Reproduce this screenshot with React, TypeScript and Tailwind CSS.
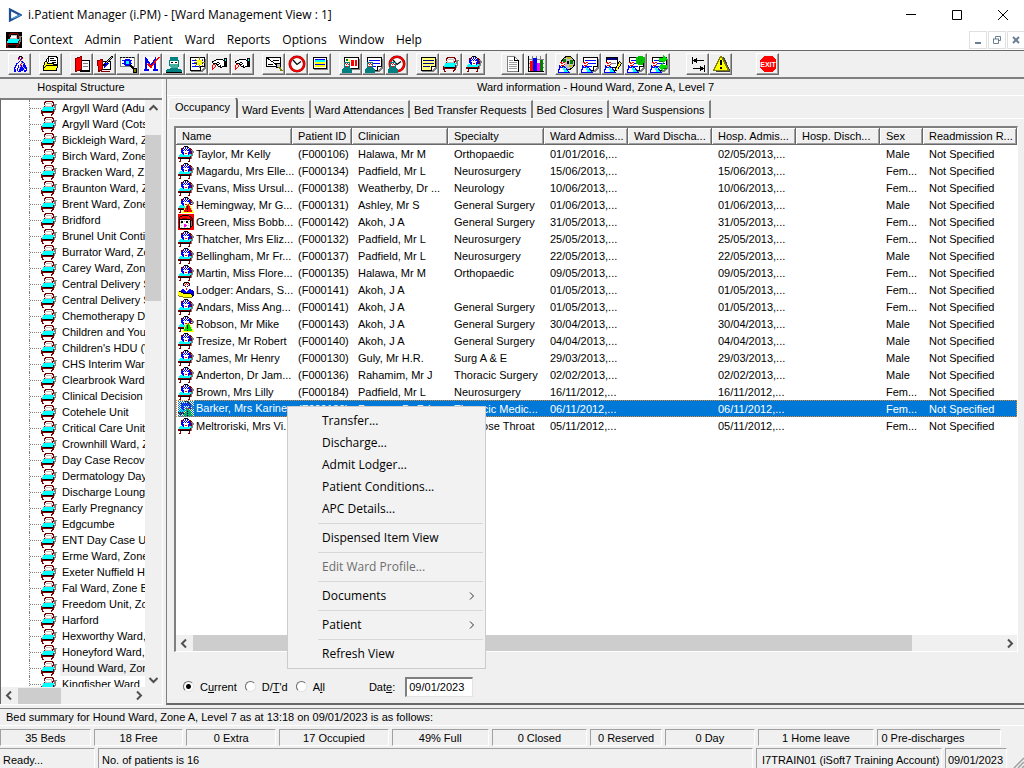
import React from "react";

const PALETTE: Record<string, string> = {
  r: "#800000",
  R: "#ff0000",
  c: "#00ffff",
  t: "#008080",
  k: "#000000",
  g: "#808080",
  l: "#c0c0c0",
  w: "#ffffff",
  b: "#0000ff",
  n: "#000080",
  y: "#ffff00",
  o: "#808000",
  G: "#00e000",
  e: "#008000",
  m: "#ff00ff",
  p: "#0078d7",
};

function Pixels({ rows, size = 16 }: { rows: string[]; size?: number }) {
  const rects: React.ReactNode[] = [];
  rows.forEach((row, y) => {
    let x = 0;
    while (x < row.length) {
      const ch = row[x];
      let end = x + 1;
      while (end < row.length && row[end] === ch) end++;
      if (PALETTE[ch]) {
        rects.push(<rect key={`${x}-${y}`} x={x} y={y} width={end - x} height={1} fill={PALETTE[ch]} />);
      }
      x = end;
    }
  });
  return (
    <svg width={size} height={size} viewBox="0 0 16 16" shapeRendering="crispEdges" className="block shrink-0" aria-hidden="true">
      {rects}
    </svg>
  );
}

const BED = [
  "................",
  "....rrrrrrrr....",
  "...rr......rr...",
  "...r.llllll.r...",
  "...r.wwwwwl.rggg",
  "....lwwwwwlrrgg.",
  "...rlllllllr.gg.",
  "..cccccccccccgg.",
  "..ccccccccccc.g.",
  ".cccccccccccrgg.",
  "rcccccccccccrg..",
  "rrkkkkkkkkkkrg..",
  "rrrrrrrrrrrrr...",
  "rr.........rr...",
  ".r........rr....",
  ".rr.......r.....",
];

const PATIENT = [
  "......kkkk......",
  ".....rwbwbk.....",
  "...rrbwbwbwrr...",
  "...rbwbwbwbbrr..",
  "...bbbwbwbbbrgg.",
  "...bbwwwwwwbbrgg",
  "...bbbwwwwbbbrgg",
  "....bbwRRwbbrrg.",
  "..cccbwwwwbccgg.",
  ".ccccccccccccgg.",
  ".cccccccccccrg..",
  "rrrrrrrrrrrrrg..",
  "rrkkkkkkkkkkrg..",
  "..r........r....",
  "..r........r....",
  ".rr.......rr....",
];

const PATIENT_RED = [
  ...PATIENT.slice(0, 6),
  "...bbbwwwwybb.gg",
  "....bbwRRyRyrrg.",
  "..cccbwwyRRy....",
  ".ccccccyRkRRy...",
  ".ccccccyRkRRy...",
  "rrrrrryRRkRRRy..",
  "rrkkkkyRRkRRRy..",
  "..r..yRRRRRRRRy.",
  "..r..yRRRkRRRRy.",
  ".rr.yyyyyyyyyyyy",
];

const PATIENT_GREEN = PATIENT_RED.map((r, i) => (i > 7 ? r.replace(/R/g, "G") : r));

const ALERT_FACE = [
  "RRRRRRRRRRRRRRRR",
  "RRRRkkkkkkkRRRRR",
  "RRkkRRRRRRRkkRRR",
  "RkRRRRRRRRRRrkRR",
  "RkRRrrrrrRRRrrkR",
  "RkkkkkkkkkkkrrkR",
  "RkwlwwwwwwlwkrkR",
  "RkwkkwlwkkwlkgkR",
  "RklkkwwwkkwwkgkR",
  "RkwlwwwwwwlwkgkR",
  "RkwwwwmmwwwwkgkR",
  "RkwlwwmmmwlwkgkR",
  "RkwwwwmmwwwwkkRR",
  "RkwlwwlwwlwwkRRR",
  "RRkkkkkkkkkkRRRR",
  "RRRRRRRRRRRRRRRR",
];

const LODGER = [
  "......kkkkk.....",
  ".....kRwRwRk....",
  ".....kwRwRwk....",
  ".....bRwwwRb....",
  "......wkwkw.....",
  "......wwwww.....",
  ".......wRw......",
  "....bbwwRwwbb...",
  "...bbbbwwwbbbbn.",
  "ykkbbbbbwbbbbbbn",
  "yyykkbbbbbbbbbbn",
  "yyyyykkkkkkkkbbn",
  "yyyyyyyyyyyyykbn",
  "oyyyyyyyyyyyyykk",
  ".ooooyyyyyyyyyk.",
  ".....ooooooooo..",
];

const SELECTED = PATIENT_GREEN.map((r, y) =>
  r
    .padEnd(16, ".")
    .split("")
    .map((ch, x) => ((x + y) % 2 === 0 ? "p" : ch))
    .join("")
);

const DOCTOR = [
  ".......kkk......",
  "......RbwRk.....",
  "......bRwbR.....",
  "......RwbRw.....",
  ".......wRw......",
  ".......bwbb.....",
  "......bwwlbb....",
  "....bbwwwRllb...",
  "....bwwwRlwbb...",
  "...bbwbwRblbbb..",
  "...bwwbwlblbbb..",
  "..bbwwblbbblbbb.",
  "..bwwbwlbbbblbb.",
  "..bbwbwbbbbblwb.",
  "..bbwbwbbbb.bbb.",
  "..bb..bbb...bb..",
];

const FOLDER = [
  ".....kkkkkkkkk..",
  ".....kwwwwwwwkk.",
  "....kkwkkkkwwwk.",
  "...kwkwwwwwwwwk.",
  "...kwkwkkkkkkwk.",
  "..kkwkwwwwwwwwk.",
  ".kyykwwwwkkkkwk.",
  ".kyykkkkkkkwwwk.",
  ".kyyyyyyyykkkkk.",
  "kyykkkkkkkkkkkk.",
  "kykyyyyyyyyyyyk.",
  "kkyyyyyyyyyyyyk.",
  "kyyyyyyyyyyyyk..",
  "kyyyyyyyyyyyyk..",
  "kkkkkkkkkkkkkk..",
  "................",
];

const HAND = [
  "................",
  "................",
  "............kkk.",
  "....kkkkkkk.kck.",
  "..kkwwwwwwwkkck.",
  "kkwwwwwwwwwwkkk.",
  "kwwwwkkwwwwwkkk.",
  ".kkkkwwkwwwwkkk.",
  ".RR.kkkwwwwwkkk.",
  "R..R.kwwkwwwkkk.",
  "R..R..kkkwkkkkk.",
  "R.R.....kk......",
  "RR..............",
  "R...............",
  "................",
  "................",
];

function Art({ children }: { children: React.ReactNode }) {
  return (
    <svg width="18" height="18" viewBox="0 0 18 18" shapeRendering="crispEdges" className="block" aria-hidden="true">
      {children}
    </svg>
  );
}

const Note = ({ fill = "#fff", line = "#0000ff" }: { fill?: string; line?: string }) => (
  <>
    <path d="M3 4h15v9l-4 4H3z" fill="#808080" />
    <path d="M2.500 2.500h14v9l-4 4h-10z" fill={fill} stroke="#000" />
    <path d="M16.500 11.500h-4v4" fill="#fff" stroke="#000" />
    <path d="M4 5.500h11M4 8.500h11M4 11.500h7" stroke={line} />
  </>
);

const Person = () => (
  <>
    <path d="M0 18v-4l3-2h4l3 2v4z" fill="#008080" />
    <path d="M2 7h6v5H2z" fill="#008080" />
    <path d="M3 8h4v3H3z" fill="#fff" />
    <path d="M3 8h1v1H3zM5 8h1v1H5zM4 9h1v1H4zM6 9h1v1H6zM4 11h2v1H4z" fill="#ff0000" />
  </>
);

const Nurse = () => (
  <>
    <path d="M0 17l2-5h5l4 5z" fill="#fff" stroke="#0000ff" />
    <path d="M5 12l5 5H6z" fill="#00ffff" />
    <path d="M2 7h5v4H2z" fill="#fff" />
    <path d="M2 7h2v1H2zM5 7h2v1H5zM3 8h2v1H3zM6 9h1v1H6zM3 10h3v1H3z" fill="#ff0000" />
    <path d="M1 10l2 3 4-2" fill="none" stroke="#0000ff" />
  </>
);

const Clock = () => (
  <g shapeRendering="auto">
    <circle cx="9" cy="9" r="7.200" fill="#fff" stroke="#800000" strokeWidth="2.600" />
    <circle cx="9" cy="9" r="7.200" fill="none" stroke="#ff0000" strokeWidth="1.600" />
    <path d="M5 5l4 4.500L13 6.500" fill="none" stroke="#000" strokeWidth="1.200" />
  </g>
);

const Chart = () => (
  <Art>
    <path d="M1 4.500h16M1 8.500h16M1 12.500h16M5.500 1v15M9.500 1v15M13.500 1v15" stroke="#808080" />
    <path d="M1.500 1v15.500H17" fill="none" stroke="#000" />
    <path d="M3 6h3v10H3z" fill="#ff0000" />
    <path d="M6 3h4v13H6z" fill="#0000ff" />
    <path d="M10 8h3v8h-3z" fill="#ff00ff" />
    <path d="M13 5h3v11h-3z" fill="#008000" />
  </Art>
);

type Tool = { label: string; icon: React.ReactNode };

const TOOL_GROUPS: { gap: string; tools: Tool[] }[] = [
  { gap: "ml-2", tools: [{ label: "Clinician", icon: <Pixels rows={DOCTOR} size={16} /> }] },
  { gap: "ml-2", tools: [{ label: "Open file", icon: <Pixels rows={FOLDER} size={16} /> }] },
  {
    gap: "ml-2",
    tools: [
      {
        label: "Casebook",
        icon: (
          <Art>
            <path d="M7.500 5.500h9v10h-9z" fill="#fff" stroke="#000" strokeWidth="1" />
            <path d="M10 8.500h5M10 11.500h5" stroke="#808080" />
            <path d="M7 15.500h10" stroke="#000" strokeWidth="2" />
            <path d="M2.500 3.500l6-2v13l-6 2z" fill="#ff0000" stroke="#800000" />
          </Art>
        ),
      },
      {
        label: "Edit casebook",
        icon: (
          <Art>
            <path d="M6.500 6.500h8v8h-8z" fill="#fff" stroke="#000" />
            <path d="M1.500 5.500l5-1v10l-4 2z" fill="#ff0000" stroke="#800000" />
            <path d="M16 1l-7 7-2 3 3-2 7-7z" fill="#c0c0c0" stroke="#000" />
            <path d="M8 8.500h4l-4 4" fill="none" stroke="#0000ff" />
            <path d="M5 16.500h9" stroke="#800000" />
          </Art>
        ),
      },
      {
        label: "Find patient",
        icon: (
          <Art>
            <path d="M1.500 2.500h14v9h-14z" fill="#fff" stroke="#808080" />
            <path d="M1 2.500h15" stroke="#000" strokeDasharray="2 1" />
            <path d="M3 5.500h10M3 8.500h10" stroke="#0000ff" />
            <path d="M6 4h5v1h1v5h-1v1H6v-1H5V5h1z" fill="#0000ff" />
            <path d="M7 6h3v3H7z" fill="#00ffff" />
            <path d="M11 10l4 4" stroke="#000" strokeWidth="2" />
            <path d="M14 13h3v4h-3z" fill="#808000" stroke="#000" />
          </Art>
        ),
      },
      {
        label: "Medication",
        icon: (
          <Art>
            <path d="M1 2h16v14H1z" fill="#fff" />
            <path d="M4 15V4l5 7 4-6v10" fill="none" stroke="#0000ff" strokeWidth="2" />
            <path d="M2 15h5M11 15h5" stroke="#0000ff" strokeWidth="2" />
            <path d="M6 9l3 3 8-10" fill="none" stroke="#ff0000" strokeWidth="1.500" />
          </Art>
        ),
      },
      {
        label: "Theatre",
        icon: (
          <Art>
            <path d="M5 2h8v3h1v6l-3 3H7l-3-3V5h1z" fill="#008080" />
            <path d="M5 6h8v3H5z" fill="#fff" />
            <path d="M6 7h2v1H6zM10 7h2v1h-2z" fill="#000" />
            <path d="M5 9h8v3l-2 2H7l-2-2z" fill="#40b0a0" />
            <path d="M1 17v-2l5-2h6l5 2v2z" fill="#008080" />
            <path d="M1 17.500h16" stroke="#000" />
          </Art>
        ),
      },
      {
        label: "New note",
        icon: (
          <Art>
            <Note />
            <path d="M11.500 2v11M6 7.500h11M7 4l8 7M15 4l-8 7" stroke="#808000" />
            <path d="M9 5h5v5H9z" fill="#ffff00" />
            <path d="M11 7h1v1h-1z" fill="#fff" />
          </Art>
        ),
      },
      { label: "Refer in", icon: <Pixels rows={HAND} /> },
      { label: "Refer out", icon: <Pixels rows={HAND} /> },
    ],
  },
  {
    gap: "ml-2",
    tools: [
      {
        label: "Find letter",
        icon: (
          <Art>
            <path d="M1.500 2.500h14v9h-14z" fill="#fff" stroke="#000" />
            <path d="M2 3l13 9M8 5.500h6M3 9.500h5" stroke="#000" />
            <path d="M11 8h4v4h-4z" fill="#c0c0c0" stroke="#000" />
            <path d="M14 12l3 4" stroke="#808000" strokeWidth="2" />
          </Art>
        ),
      },
      { label: "Waiting times", icon: <Art><Clock /></Art> },
      {
        label: "Clinic list",
        icon: (
          <Art>
            <path d="M3 5h14v10H3z" fill="#808080" />
            <path d="M2.500 2.500h13v11h-13z" fill="#fff" stroke="#000" />
            <path d="M4 4h10v1H4z" fill="#0000ff" />
            <path d="M4 5h10v2H4z" fill="#00ffff" />
            <path d="M4 7h10v2H4z" fill="#ffff00" />
            <path d="M4 9h10v1H4z" fill="#0000ff" />
            <path d="M4 10h10v2H4z" fill="#ffff00" />
          </Art>
        ),
      },
    ],
  },
  {
    gap: "ml-2",
    tools: [
      {
        label: "Outpatient card",
        icon: (
          <Art>
            <path d="M4 4h14v11H4z" fill="#808080" />
            <path d="M2.500 2.500h14v11h-14z" fill="#fff" stroke="#000" />
            <path d="M4 4h2v2H4zM4 7h2v1H4z" fill="#008000" />
            <path d="M9 5h3v6H9zM13 5h2v6h-2z" fill="#ff0000" />
            <path d="M7 4h1v3H7z" fill="#ffff00" />
            <Person />
          </Art>
        ),
      },
      { label: "Outpatient note", icon: <Art><Note /><Person /></Art> },
      { label: "Outpatient clock", icon: <Art><Clock /><Person /></Art> },
    ],
  },
  {
    gap: "ml-2",
    tools: [
      { label: "Ward note", icon: <Art><Note fill="#ffff80" line="#000080" /></Art> },
      { label: "Ward view", icon: <Pixels rows={BED} size={16} /> },
      { label: "Inpatient", icon: <Pixels rows={PATIENT} size={16} /> },
    ],
  },
  {
    gap: "ml-4",
    tools: [
      {
        label: "Document",
        icon: (
          <Art>
            <path d="M3.500 1.500h7l4 4v11h-11z" fill="#fff" stroke="#808080" />
            <path d="M10.500 1.500v4h4v11" fill="none" stroke="#000" />
            <path d="M5 5.500h4M5 7.500h8M5 9.500h8M5 11.500h8M5 13.500h8" stroke="#a0a0a0" />
          </Art>
        ),
      },
      { label: "Reports", icon: <Chart /> },
    ],
  },
  {
    gap: "ml-2",
    tools: [
      {
        label: "Community",
        icon: (
          <Art>
            <circle cx="10" cy="8" r="6.500" fill="#c0c0c0" stroke="#000" />
            <path d="M5 4h3v3H5zM12 5h3v4h-3z" fill="#008000" />
            <path d="M9 2h4v2H9zM11 10h3v2h-3z" fill="#c0c000" />
            <path d="M9 6h2v3H9z" fill="#000" />
            <Nurse />
          </Art>
        ),
      },
      { label: "Nurse note", icon: <Art><Note /><Nurse /></Art> },
      {
        label: "Edit nurse note",
        icon: (
          <Art>
            <path d="M2.500 2.500h11v10h-11z" fill="#fff" stroke="#000" />
            <path d="M3 4h10" stroke="#000080" strokeWidth="2" />
            <path d="M5 8.500h7" stroke="#808080" />
            <Nurse />
            <path d="M15.500 6.500l-4 7-1 3 3-2 4-6z" fill="#ffff00" stroke="#000" />
          </Art>
        ),
      },
      {
        label: "Visit note",
        icon: (
          <Art>
            <Note />
            <path d="M9 2h2V1h5v1h2v6h-2v2h-5V9H9z" fill="#00c000" />
            <path d="M11 3h1v1h-1zM14 5h1v1h-1zM12 7h1v1h-1z" fill="#008000" />
            <Nurse />
          </Art>
        ),
      },
      {
        label: "Transfer note",
        icon: (
          <Art>
            <Note />
            <path d="M9 3h4V0l5 4-5 4V6H9z" fill="#00e000" />
            <path d="M17 10h-4V8l-5 4 5 4v-3h4z" fill="#00e000" />
            <path d="M9 6.500h4M13 13.500h4" stroke="#008000" />
            <Nurse />
          </Art>
        ),
      },
    ],
  },
  {
    gap: "ml-4",
    tools: [
      {
        label: "Switch",
        icon: (
          <Art>
            <path d="M3.500 2v7M15.500 10v7M4 5.500h11M4 13.500h11" stroke="#000" />
            <path d="M4 5.500l4-3v6zM15 13.500l-4-3v6z" fill="#000" />
          </Art>
        ),
      },
      {
        label: "Alerts",
        icon: (
          <Art>
            <path d="M10 2h2l6 13v2H4z" fill="#404040" />
            <path d="M8.500 1.500h1l7 14h-15z" fill="#ffff00" stroke="#808000" />
            <path d="M8 5h2v5H8zM8 12h2v2H8z" fill="#000" />
          </Art>
        ),
      },
    ],
  },
  {
    gap: "ml-6",
    tools: [
      {
        label: "Exit",
        icon: (
          <Art>
            <path d="M5 1h8l4 4v8l-4 4H5l-4-4V5z" fill="#ff0000" />
            <text x="9" y="12" textAnchor="middle" fontSize="7" fontWeight="700" fill="#fff" fontFamily="Liberation Sans, sans-serif">
              EXIT
            </text>
          </Art>
        ),
      },
    ],
  },
];

const WARDS = [
  "Argyll Ward (Adul",
  "Argyll Ward (Cots",
  "Bickleigh Ward, Z",
  "Birch Ward, Zone",
  "Bracken Ward, Z",
  "Braunton Ward, Z",
  "Brent Ward, Zone",
  "Bridford",
  "Brunel Unit Contin",
  "Burrator Ward, Zo",
  "Carey Ward, Zon",
  "Central Delivery S",
  "Central Delivery S",
  "Chemotherapy Da",
  "Children and You",
  "Children's HDU (W",
  "CHS Interim Ward",
  "Clearbrook Ward,",
  "Clinical Decision U",
  "Cotehele Unit",
  "Critical Care Unit",
  "Crownhill Ward, Z",
  "Day Case Recov",
  "Dermatology Day",
  "Discharge Loung",
  "Early Pregnancy U",
  "Edgcumbe",
  "ENT Day Case U",
  "Erme Ward, Zone",
  "Exeter Nuffield Ho",
  "Fal Ward, Zone B",
  "Freedom Unit, Zo",
  "Harford",
  "Hexworthy Ward,",
  "Honeyford Ward,",
  "Hound Ward, Zon",
  "Kingfisher Ward",
];

const ICONS = { bed: PATIENT, red: PATIENT_RED, green: PATIENT_GREEN, face: ALERT_FACE, lodger: LODGER, selected: SELECTED };

type Row = [keyof typeof ICONS, string, string, string, string, string, string, string];

const ROWS: Row[] = [
  ["bed", "Taylor, Mr Kelly", "(F000106)", "Halawa, Mr M", "Orthopaedic", "01/01/2016,...", "02/05/2013,...", "Male"],
  ["bed", "Magardu, Mrs Elle...", "(F000134)", "Padfield, Mr L", "Neurosurgery", "15/06/2013,...", "15/06/2013,...", "Fem..."],
  ["bed", "Evans, Miss Ursul...", "(F000138)", "Weatherby, Dr ...", "Neurology", "10/06/2013,...", "10/06/2013,...", "Fem..."],
  ["red", "Hemingway, Mr G...", "(F000131)", "Ashley, Mr S", "General Surgery", "01/06/2013,...", "01/06/2013,...", "Male"],
  ["face", "Green, Miss Bobb...", "(F000142)", "Akoh, J A", "General Surgery", "31/05/2013,...", "31/05/2013,...", "Fem..."],
  ["bed", "Thatcher, Mrs Eliz...", "(F000132)", "Padfield, Mr L", "Neurosurgery", "25/05/2013,...", "25/05/2013,...", "Fem..."],
  ["bed", "Bellingham, Mr Fr...", "(F000137)", "Padfield, Mr L", "Neurosurgery", "22/05/2013,...", "22/05/2013,...", "Male"],
  ["bed", "Martin, Miss Flore...", "(F000135)", "Halawa, Mr M", "Orthopaedic", "09/05/2013,...", "09/05/2013,...", "Fem..."],
  ["lodger", "Lodger: Andars, S...", "(F000141)", "Akoh, J A", "", "01/05/2013,...", "01/05/2013,...", "Fem..."],
  ["bed", "Andars, Miss Ang...", "(F000141)", "Akoh, J A", "General Surgery", "01/05/2013,...", "01/05/2013,...", "Fem..."],
  ["green", "Robson, Mr Mike", "(F000143)", "Akoh, J A", "General Surgery", "30/04/2013,...", "30/04/2013,...", "Male"],
  ["bed", "Tresize, Mr Robert", "(F000140)", "Akoh, J A", "General Surgery", "04/04/2013,...", "04/04/2013,...", "Male"],
  ["bed", "James, Mr Henry", "(F000130)", "Guly, Mr H.R.", "Surg A & E", "29/03/2013,...", "29/03/2013,...", "Male"],
  ["bed", "Anderton, Dr Jam...", "(F000136)", "Rahamim, Mr J", "Thoracic Surgery", "02/02/2013,...", "02/02/2013,...", "Male"],
  ["bed", "Brown, Mrs Lilly", "(F000184)", "Padfield, Mr L", "Neurosurgery", "16/11/2012,...", "16/11/2012,...", "Fem..."],
  ["selected", "Barker, Mrs Karine", "(F000139)", "Ranson, Dr R I", "Thoracic Medic...", "06/11/2012,...", "06/11/2012,...", "Fem..."],
  ["bed", "Meltroriski, Mrs Vi...", "", "", "Ear Nose Throat", "05/11/2012,...", "05/11/2012,...", "Fem..."],
];

const COLUMNS = [
  { title: "Name", width: "w-[116px]" },
  { title: "Patient ID", width: "w-[60px]" },
  { title: "Clinician", width: "w-[96px]" },
  { title: "Specialty", width: "w-[96px]" },
  { title: "Ward Admiss...", width: "w-[84px]" },
  { title: "Ward Discha...", width: "w-[84px]" },
  { title: "Hosp. Admis...", width: "w-[84px]" },
  { title: "Hosp. Disch...", width: "w-[84px]" },
  { title: "Sex", width: "w-[43px]" },
  { title: "Readmission R...", width: "w-auto" },
];

const CHEVRONS = {
  up: "M1.500 7L5.500 3l4 4",
  down: "M1.500 4l4 4 4-4",
  left: "M7 1.500L3 5.500l4 4",
  right: "M4 1.500l4 4-4 4",
};

function ScrollButton({ dir }: { dir: keyof typeof CHEVRONS }) {
  return (
    <button type="button" aria-label={`Scroll ${dir}`} className="flex size-4 shrink-0 items-center justify-center">
      <svg width="11" height="11" viewBox="0 0 11 11" aria-hidden="true">
        <path d={CHEVRONS[dir]} fill="none" stroke="#505050" strokeWidth="2" />
      </svg>
    </button>
  );
}

function Radio({ id, checked, children }: { id: string; checked?: boolean; children: React.ReactNode }) {
  return (
    <div className="flex items-center gap-[6px]">
      <input
        id={id}
        type="radio"
        name="period"
        defaultChecked={checked}
        className="size-[11px] appearance-none rounded-full border border-t-[#696969] border-l-[#696969] border-r-[#e3e3e3] border-b-[#e3e3e3] bg-white checked:bg-[radial-gradient(circle,#000_0_2px,#fff_3px)]"
      />
      <label htmlFor={id}>{children}</label>
    </div>
  );
}

const MENU: ({ label: string; disabled?: boolean; sub?: boolean } | null)[] = [
  { label: "Transfer..." },
  { label: "Discharge..." },
  { label: "Admit Lodger..." },
  { label: "Patient Conditions..." },
  { label: "APC Details..." },
  null,
  { label: "Dispensed Item View" },
  null,
  { label: "Edit Ward Profile...", disabled: true },
  null,
  { label: "Documents", sub: true },
  null,
  { label: "Patient", sub: true },
  null,
  { label: "Refresh View" },
];

const TABS = ["Ward Events", "Ward Attendances", "Bed Transfer Requests", "Bed Closures", "Ward Suspensions"];

const SUMMARY = ["35 Beds", "18 Free", "0 Extra", "17 Occupied", "49% Full", "0 Closed", "0 Reserved", "0 Day", "1 Home leave", "0 Pre-discharges"];

export default function App() {
  return (
    <div className="relative flex h-screen flex-col overflow-hidden bg-[#f0f0f0] font-['Liberation_Sans',Arial,sans-serif] text-[11px] leading-4 text-black">
      <header className="bg-white font-['Open_Sans','Noto_Sans',sans-serif] text-[12px]">
        <div className="flex h-[30px] items-center pl-2">
          <svg width="14" height="14" viewBox="0 0 14 14" className="mr-[6px]" aria-hidden="true">
            <path d="M2 1.500v11L12.500 7z" fill="none" stroke="#1c4f93" strokeWidth="2.200" />
            <path d="M4.500 10.500L12.500 7" stroke="#4fb3e8" strokeWidth="1" />
          </svg>
          <h1>i.Patient Manager (i.PM) - [Ward Management View : 1]</h1>
          <div className="ml-auto flex items-center gap-9 pr-4">
            <button type="button" aria-label="Minimize">
              <svg width="10" height="10" viewBox="0 0 10 10"><path d="M0 4.500h10" stroke="#000" /></svg>
            </button>
            <button type="button" aria-label="Maximize">
              <svg width="10" height="10" viewBox="0 0 10 10"><path d="M.5.500h9v9h-9z" fill="none" stroke="#000" /></svg>
            </button>
            <button type="button" aria-label="Close">
              <svg width="10" height="10" viewBox="0 0 10 10"><path d="M0 0l10 10M10 0L0 10" stroke="#000" /></svg>
            </button>
          </div>
        </div>
        <div className="flex h-5 items-center pl-[6px]">
          <span className="mr-[7px] bg-black"><Pixels rows={BED} /></span>
          <nav className="flex gap-3">
            {["Context", "Admin", "Patient", "Ward", "Reports", "Options", "Window", "Help"].map((m) => (
              <button key={m} type="button">{m}</button>
            ))}
          </nav>
          <div className="ml-auto flex gap-[1px] text-[#6b7f93]">
            <button type="button" aria-label="Minimize view" className="flex h-[18px] w-[18px] items-center justify-center border border-[#e0e0e0]">
              <svg width="8" height="8" viewBox="0 0 8 8"><path d="M1 6h6v2H1z" fill="currentColor" /></svg>
            </button>
            <button type="button" aria-label="Restore view" className="flex h-[18px] w-[18px] items-center justify-center border border-[#e0e0e0]">
              <svg width="8" height="8" viewBox="0 0 8 8"><path d="M2.500 3V.5h5v4H6M0 3h6M.5 3v4.500h5V3" fill="none" stroke="currentColor" /></svg>
            </button>
            <button type="button" aria-label="Close view" className="flex h-[18px] w-[17px] items-center justify-center border border-r-0 border-[#e0e0e0]">
              <svg width="8" height="8" viewBox="0 0 8 8"><path d="M1 1l6 6M7 1L1 7" stroke="currentColor" strokeWidth="2" /></svg>
            </button>
          </div>
        </div>
      </header>

      <div role="toolbar" aria-label="Main" className="flex h-[29px] shrink-0 items-center border-t border-b-2 border-t-[#696969] border-b-[#808080]">
        {TOOL_GROUPS.map((g, i) => (
          <div key={i} className={`flex ${g.gap}`}>
            {g.tools.map((t) => (
              <button
                key={t.label}
                type="button"
                aria-label={t.label}
                className="flex h-[22px] w-[23px] items-center justify-center border border-t-white border-r-[#696969] border-b-[#696969] border-l-white shadow-[inset_-1px_-1px_0_#a0a0a0]"
              >
                {t.icon}
              </button>
            ))}
          </div>
        ))}
      </div>

      <div className="flex min-h-0 flex-1">
        <aside className="flex w-[163px] shrink-0 flex-col border-r border-white">
          <h2 className="h-[19px] text-center">Hospital Structure</h2>
          <div className="flex min-h-0 flex-1 flex-col border-t-2 border-l border-t-[#808080] border-l-[#696969]">
            <div className="flex min-h-0 flex-1">
              <ul className="min-w-0 flex-1 overflow-hidden bg-white">
                {WARDS.map((w, i) => (
                  <li key={i} className="ml-7 flex h-4 items-center border-l border-dotted border-[#808080] whitespace-nowrap">
                    <span className="w-[11px] shrink-0 border-t border-dotted border-[#808080]" />
                    <Pixels rows={BED} />
                    <span className={w.startsWith("Hound") ? "ml-[3px] flex-1 bg-[#f0f0f0] pl-[2px]" : "ml-[3px] pl-[2px]"}>{w}</span>
                  </li>
                ))}
              </ul>
              <div className="flex w-[17px] shrink-0 flex-col pr-[1px]">
                <ScrollButton dir="up" />
                <div className="flex flex-1 flex-col pt-[19px]">
                  <div className="h-[31%] bg-[#cdcdcd]" />
                </div>
                <ScrollButton dir="down" />
              </div>
            </div>
            <div className="flex h-[17px] items-center pr-4">
              <ScrollButton dir="left" />
              <div className="h-4 flex-1 pl-[1px]">
                <div className="h-full w-[43px] bg-[#cdcdcd]" />
              </div>
              <ScrollButton dir="right" />
            </div>
          </div>
          <div className="h-px bg-white" />
        </aside>

        <main className="ml-[3px] flex min-w-0 flex-1 flex-col border-b-2 border-l border-b-[#696969] border-l-[#808080]">
          <h2 className="h-[17px] border-b border-white text-center">Ward information - Hound Ward, Zone A, Level 7</h2>
          <div role="tablist" className="flex h-[23px] shrink-0 items-end border-b border-white pl-[1px]">
            <button type="button" role="tab" aria-selected="true" className="h-[21px] rounded-t-sm border-t border-r-2 border-l border-t-white border-r-[#696969] border-l-white px-[6px] pb-[3px]">
              Occupancy
            </button>
            {TABS.map((t) => (
              <button key={t} type="button" role="tab" aria-selected="false" className="h-[18px] border-t border-r-2 border-t-white border-r-[#808080] px-1">
                {t}
              </button>
            ))}
          </div>

          <div className="mt-[7px] mr-[6px] ml-[7px] flex min-h-0 flex-1 flex-col border-t-2 border-r border-b border-l-2 border-t-[#808080] border-r-white border-b-white border-l-[#808080] bg-white">
            <div className="min-h-0 flex-1 overflow-hidden">
              <table className="w-full table-fixed border-separate border-spacing-0">
                <thead>
                  <tr className="h-[17px] bg-[#f0f0f0]">
                    {COLUMNS.map((c) => (
                      <th
                        key={c.title}
                        scope="col"
                        className={`${c.width} h-[17px] overflow-hidden border-r border-b border-[#696969] p-0 pl-[6px] text-left font-normal whitespace-nowrap shadow-[inset_1px_1px_0_#fff,inset_-1px_-1px_0_#a0a0a0]`}
                      >
                        {c.title}
                      </th>
                    ))}
                  </tr>
                </thead>
                <tbody>
                  {ROWS.map(([icon, name, id, clinician, specialty, ward, hosp, sex], i) => {
                    const selected = icon === "selected";
                    return (
                      <tr key={i} className={selected ? "h-[17px] bg-[#0078d7] text-white outline-1 -outline-offset-1 outline-dotted outline-[#e08a30]" : "h-[17px]"}>
                        <td className="bg-white p-0 pl-[2px]">
                          <div className="flex h-[17px] items-center whitespace-nowrap">
                            <Pixels rows={ICONS[icon]} />
                            <span className={selected ? "h-full flex-1 bg-[#0078d7] pl-[2px] leading-[17px]" : "pl-[2px]"}>{name}</span>
                          </div>
                        </td>
                        {[id, clinician, specialty, ward, "", hosp, "", sex, "Not Specified"].map((v, j) => (
                          <td key={j} className="p-0 pl-[6px] whitespace-nowrap">{v}</td>
                        ))}
                      </tr>
                    );
                  })}
                </tbody>
              </table>
            </div>
            <div className="flex h-4 shrink-0 bg-[#f0f0f0]">
              <ScrollButton dir="left" />
              <div className="flex-1 pl-[1px]">
                <div className="h-full w-[89%] bg-[#cdcdcd]" />
              </div>
              <ScrollButton dir="right" />
            </div>
          </div>

          <form className="flex h-[51px] shrink-0 items-center gap-2 pt-[18px] pl-4">
            <Radio id="current" checked>C<u>u</u>rrent</Radio>
            <Radio id="dtd">D/<u>T</u>'d</Radio>
            <Radio id="all">A<u>l</u>l</Radio>
            <label htmlFor="date" className="ml-9">Dat<u>e</u>:</label>
            <input
              id="date"
              type="text"
              defaultValue="09/01/2023"
              className="ml-[2px] h-5 w-[68px] border-t-2 border-r border-b border-l-2 border-t-[#808080] border-r-[#e3e3e3] border-b-[#e3e3e3] border-l-[#808080] bg-white pl-[2px]"
            />
          </form>
        </main>
      </div>

      <footer className="shrink-0 pt-[3px]">
        <p className="h-[18px] border-t border-b border-t-[#808080] border-b-white pl-[6px]">
          Bed summary for Hound Ward, Zone A, Level 7 as at 13:18 on 09/01/2023 is as follows:
        </p>
        <div className="mt-[3px] grid grid-cols-[91fr_90fr_90fr_110fr_97fr_96fr_72fr_90fr_117fr_124fr] gap-[3px] pr-[23px]">
          {SUMMARY.map((s, i) => (
            <div key={s} className={`h-[17px] overflow-hidden border border-t-[#a0a0a0] border-r-white border-b-white border-l-[#a0a0a0] whitespace-nowrap ${i === 9 ? "pl-[3px]" : "text-center"}`}>
              {s}
            </div>
          ))}
        </div>
        <div className="mt-[2px] flex h-5 gap-[3px] leading-[22px]">
          <div className="w-[95px] border-t border-r border-t-[#a0a0a0] border-r-white pl-[3px]">Ready...</div>
          <div className="flex-1 border-t border-r border-l border-t-[#a0a0a0] border-r-white border-l-[#a0a0a0] pl-[3px]">No. of patients is 16</div>
          <div className="w-[186px] border-t border-r border-l border-t-[#a0a0a0] border-r-white border-l-[#a0a0a0] pl-[5px] whitespace-nowrap">I7TRAIN01 (iSoft7 Training Account)</div>
          <div className="w-[62px] border-t border-r border-l border-t-[#a0a0a0] border-r-white border-l-[#a0a0a0] pl-[2px]">09/01/2023</div>
          <svg width="14" height="12" viewBox="0 0 14 12" className="self-end" aria-hidden="true">
            <path d="M4 12L14 2M8 12l6-6M12 12l2-2" stroke="#a0a0a0" strokeWidth="1.500" />
          </svg>
        </div>
      </footer>

      <div role="menu" className="absolute top-[406px] left-[287px] w-[199px] border border-[#cccccc] bg-[#f2f2f2] py-[3px] font-['Open_Sans','Noto_Sans',sans-serif] text-[12px]">
        {MENU.map((m, i) =>
          m === null ? (
            <div key={i} role="separator" className="mr-[2px] ml-[30px] h-[7px] py-[3px]">
              <div className="h-px bg-[#d7d7d7]" />
            </div>
          ) : (
            <button
              key={i}
              type="button"
              role="menuitem"
              disabled={m.disabled}
              className="flex h-[22px] w-full items-center justify-between pr-[10px] pl-[34px] text-left disabled:text-[#6d6d6d]"
            >
              {m.label}
              {m.sub && (
                <svg width="6" height="8" viewBox="0 0 6 8" aria-hidden="true">
                  <path d="M1 .5L4.500 4 1 7.500" fill="none" stroke="#333" />
                </svg>
              )}
            </button>
          )
        )}
      </div>
    </div>
  );
}
